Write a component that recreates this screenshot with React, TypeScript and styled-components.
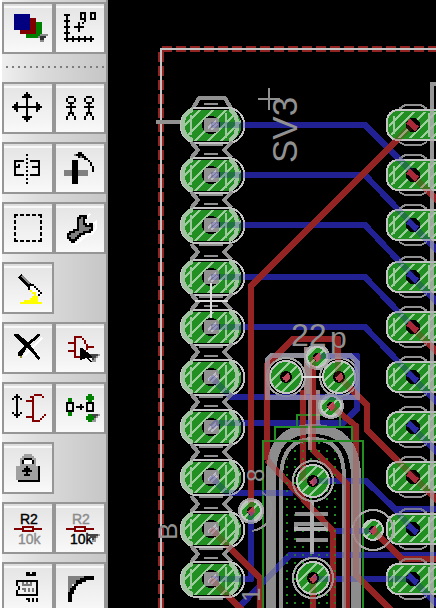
import React from "react";
import styled, { createGlobalStyle } from "styled-components";

const GlobalStyle = createGlobalStyle`
  * { box-sizing: border-box; }
  body { margin: 0; background: #000; font-family: "Liberation Sans", Arial, sans-serif; }
`;

const Editor = styled.main`
  display: flex;
  height: 100vh;
  overflow: hidden;
  background: #000;
`;

const Toolbar = styled.nav`
  flex: none;
  display: flex;
  flex-direction: column;
  gap: 8px;
  padding: 2px 0 0 0;
  overflow: hidden;
  border-left: 2px solid #fff;
  border-right: 2px solid #949494;
  background: linear-gradient(90deg, #efefef, #dcdcdc 35%, #c6c6c6);
`;

const ToolRow = styled.div`
  flex: none;
  display: flex;
`;

const Separator = styled.hr`
  flex: none;
  width: 100px;
  height: 2px;
  margin: 4px 0 6px 4px;
  border: 0;
  background: repeating-linear-gradient(90deg, #7c7c7c 0 2px, transparent 2px 6px);
`;

const ToolButton = styled.button`
  display: block;
  width: 52px;
  height: 52px;
  padding: 0;
  border: 2px solid #969696;
  border-radius: 0;
  background: linear-gradient(#dedede 0 2px, #f8f8f8 2px 4px, #e5e5e5 4px, #f9f9f9);
  cursor: pointer;
`;

const Glyph = styled.svg`
  display: block;
  width: 48px;
  height: 48px;
  shape-rendering: crispEdges;
  font-family: "Liberation Sans", Arial, sans-serif;
`;

const Board = styled.section`
  flex: 1;
  min-width: 0;
  background: #000;
`;

const BoardDrawing = styled.svg`
  display: block;
  width: 100%;
  height: 100%;
  shape-rendering: crispEdges;
  font-family: "Liberation Sans", Arial, sans-serif;
`;

/* Filled grid cells, listed as "x y w h" groups separated by commas. */
function Cells({ at, fill = "#000" }: { at: string; fill?: string }) {
  const d = at
    .split(",")
    .map((cell) => {
      const [x, y, w, h] = cell.trim().split(/\s+/).map(Number);
      return `M${x} ${y}h${w}v${h}h${-w}z`;
    })
    .join("");
  return <path d={d} fill={fill} />;
}

function Flyout() {
  return (
    <>
      <path d="M17 16h6v1h-1v1h-1v2h-2v-2h-1v-1h-1z" fill="#999" />
      <path d="M17 16h5v1h-1v1h-1v1h-1v-1h-1v-1h-1z" fill="#444" />
    </>
  );
}

function Resistor({ name, value }: { name: string; value: string }) {
  return (
    <>
      <text x="9" y="11" fontSize="7" stroke={name} strokeWidth=".2" fill={name}>R2</text>
      <Cells fill="#800000" at="6 13 4 1,16 13 4 1,10 12 6 1,10 14 6 1,10 12 1 3,15 12 1 3" />
      <text x="8" y="21" fontSize="7" stroke={value} strokeWidth=".2" fill={value}>10k</text>
    </>
  );
}

const person = (x: number) =>
  [[1, 7, 3, 1], [0, 8, 1, 2], [4, 8, 1, 2], [1, 10, 3, 1], [2, 11, 1, 5], [0, 12, 5, 1], [1, 15, 1, 2], [3, 15, 1, 2], [0, 17, 1, 2], [4, 17, 1, 2]]
    .map(([dx, y, w, h]) => `${x + dx} ${y} ${w} ${h}`)
    .join(",");

const sideDashes = [9, 12, 15].map((p) => `${p} 6 2 1,${p} 19 2 1,6 ${p} 1 2,19 ${p} 1 2`).join(",");
const cornerDashes = "6 6 2 1,18 6 2 1,6 19 2 1,18 19 2 1,6 6 1 2,19 6 1 2,6 18 1 2,19 18 1 2";

const icons: Record<string, React.ReactNode> = {
  Display: (
    <>
      <Cells fill="#008000" at="12 10 8 8" />
      <Cells fill="#800000" at="9 8 8 8" />
      <Cells fill="#000080" at="6 6 8 8" />
      <path d="M18 17h1v-1h4v1h-1v1h-1v2h-2v-2h-1z" fill="#8b8b8b" />
      <Cells fill="#333" at="19 17 3 1,19 18 2 1" />
    </>
  ),
  Mark: (
    <Cells at="6 6 1 14,5 6 3 1,5 9 3 1,5 12 3 1,5 15 3 1,5 18 15 1,9 17 1 3,12 17 1 3,15 17 1 3,18 17 1 3,12 10 1 5,10 12 5 1,13 5 3 1,13 5 1 4,15 5 1 4,13 8 3 1,18 5 3 1,18 5 1 4,20 5 1 4,18 8 3 1,15 9 1 1,14 10 1 1" />
  ),
  Move: (
    <Cells at="12 5 1 15,5 12 15 1,11 6 3 1,10 7 5 1,11 18 3 1,10 17 5 1,6 11 1 3,7 10 1 5,18 11 1 3,17 10 1 5" />
  ),
  Copy: <Cells at={`${person(6)},${person(15)}`} />,
  Mirror: (
    <Cells at="12 6 1 1,12 8 1 1,12 10 1 1,12 12 1 1,12 14 1 1,12 16 1 1,12 18 1 1,12 20 1 1,6 9 1 8,6 9 5 1,6 16 5 1,7 12 2 1,8 11 1 1,14 9 5 1,18 9 1 8,14 16 5 1,15 12 3 1" />
  ),
  Rotate: (
    <>
      <Cells fill="#808080" at="5 14 12 3" />
      <Cells at="9 9 3 12,11 6 4 1,12 5 2 1,12 7 2 1,14 7 2 1,15 8 2 1,17 9 1 1,18 10 1 2,19 12 1 3" />
      <Cells fill="#808080" at="10 6 1 1,13 7 1 1" />
    </>
  ),
  Group: <Cells at={`${cornerDashes},${sideDashes}`} />,
  Change: (
    <>
      <path d="M9 21h2l6-5h2l2-3v-3l-3 2-3-1v-2l3-3" fill="none" stroke="#fff" strokeWidth="1" />
      <path d="M12 9V8h1V7h3v1h-1v3h1v1h2v-1h1v3h-1v1h-3v1h-2v1h-1v1h-1v1h-1v1H9v-1H8v-1H7v-2h1v-1h2v-1h2z" fill="#808080" stroke="#000" strokeWidth="1" />
    </>
  ),
  Paint: (
    <>
      <path d="M9 7l5 5" stroke="#000" strokeWidth="2.5" />
      <path d="M10 7l4 4" stroke="#8a8a8a" strokeWidth="1" />
      <path d="M13 12l2-1 5 5-1 1-3-1z" fill="#fff" />
      <Cells at="13 11 3 1,13 12 1 2,16 12 1 1,17 13 1 1,18 14 1 1,19 15 1 1,18 16 1 1" />
      <Cells fill="#ff0" at="14 14 1 1,15 15 1 1,16 15 1 1,16 16 1 1,15 17 3 1,14 18 4 1,11 19 7 1,9 20 11 1" />
    </>
  ),
  Delete: (
    <>
      <path d="M8 7l11 10M20 8l-9 9" stroke="#fff" strokeWidth="1" />
      <path d="M6 6h2l5 4 3 4 3 4-1 1-3-4-5-4-4-4zM18 6h1v1l-6 5-3 5H8v-2l4-4z" fill="#000" />
      <Cells fill="#99922d" at="9 17 1 1" />
    </>
  ),
  Add: (
    <>
      <Cells fill="#800000" at="10 7 1 11,10 7 4 1,14 8 1 1,15 9 1 2,16 11 1 3,16 12 4 1,7 10 3 1,7 14 3 1,10 17 4 1,15 14 1 2" />
      <Flyout />
      <path d="M13 13h1l5 4v1h-2l2 2h-1l-2-2-3 1z" fill="#000" />
    </>
  ),
  Pinswap: (
    <>
      <Cells at="7 6 1 12,6 7 3 1,5 8 1 1,9 8 1 1,6 16 3 1,5 15 1 1,9 15 1 1" />
      <Cells fill="#800000" at="15 7 1 13,12 9 3 1,12 17 4 1,16 6 4 1,14 7 2 1,20 7 1 1,15 19 4 1,19 18 1 1,20 17 1 1,21 16 1 1" />
    </>
  ),
  Replace: (
    <>
      <Cells fill="#008000" at="7 8 2 2,7 15 2 2,16 7 4 2,17 6 2 4" />
      <Cells at="6 10 4 1,6 10 1 5,9 10 1 5,6 14 4 1,16 10 4 1,16 10 1 5,19 10 1 5,16 14 4 1,11 12 4 1,13 11 1 3" />
      <Flyout />
      <Cells fill="#008000" at="16 17 4 2,17 16 2 4" />
    </>
  ),
  Lock: (
    <>
      <Cells at="8 12 11 8,16 9 1 3" />
      <path d="M7 19v-7h2V8h1V7h1V6h4v1h1v1h1v4h1v7z" fill="#a0a0a0" />
      <Cells fill="#fff" at="11 9 4 2" />
      <Cells at="11 8 4 1,10 9 1 2,15 9 1 2,11 13 3 1,10 14 5 1,12 12 1 5,11 16 3 1" />
    </>
  ),
  Name: <Resistor name="#000" value="#8c8c8c" />,
  Value: (
    <>
      <Resistor name="#8c8c8c" value="#000" />
      <Flyout />
    </>
  ),
  Smash: (
    <>
      <Cells at="7 9 11 1,7 9 1 3,17 9 1 8,7 16 11 1,7 14 1 3,8 12 1 2,12 6 5 1,13 5 1 1,15 5 1 1,12 5 1 1,16 5 1 1,12 18 2 1,13 18 1 2,15 18 1 2,17 18 1 2" />
      <Cells fill="#777" at="10 10 1 2,12 10 1 2,14 10 1 2,10 11 5 1,10 13 2 1,11 13 1 2,13 13 1 2,15 13 1 2" />
    </>
  ),
  Miter: (
    <>
      <Cells fill="#808080" at="7 7 2 9,7 7 9 2,9 9 2 2" />
      <Cells at="15 7 5 2,13 8 3 2,11 9 3 2,10 11 2 1,9 12 2 2,8 13 2 3,7 15 2 5" />
    </>
  ),
};

const rows = [
  ["Move", "Copy"], ["Mirror", "Rotate"], ["Group", "Change"], ["Paint"], ["Delete", "Add"],
  ["Pinswap", "Replace"], ["Lock"], ["Name", "Value"], ["Smash", "Miter"],
];

function Tools({ names }: { names: string[] }) {
  return (
    <ToolRow>
      {names.map((name) => (
        <ToolButton key={name} type="button" aria-label={name}>
          <Glyph viewBox="1 1 24 24" aria-hidden="true">{icons[name]}</Glyph>
        </ToolButton>
      ))}
    </ToolRow>
  );
}

const RED = "#912323";
const BLUE = "#212191";
const GREEN = "#218f21";
const SILK = "#919191";
const LIGHT = "#c4c4c4";

const padRows = [125, 175, 225, 277, 327, 377, 427, 477, 529, 579];

const blueTraces = `
  M211 125H365L412 172 M211 175H365L412 224 M211 225H365L412 275
  M211 277H365L412 326 M211 327H365L412 376 M211 377L231 397H357V356H320
  M211 427L216 423H343L357 409V390 M211 477L227 493H293 M313 481H366L395 509H436
  M211 579H251V512 M238 608L290 555H436 M335 531H373 M313 579H412
  M412 225L440 253 M412 277L440 305 M412 377L440 405 M412 427L440 455
  M412 529L395 509 M412 579L440 607`;

const redTraces = `
  M412 125L251 286V512 M267 460V365L293 339H338V377 M267 460L333 531V608
  M303 390V481 M313 357V450L347 484V608 M339 377L367 405V430L412 475L440 503
  M331 406L356 426V575L392 611 M373 530L402 559H436
  M211 529L260 578V608 M211 579L242 610 M313 578V608 M412 175L440 203 M412 327L440 355`;

function LeftPad({ y, first }: { y: number; first: boolean }) {
  return (
    <g transform={`translate(211 ${y})`}>
      {!first && (
        <path d="M-20-17-13-25-20-33M21-17 13-25 21-33" fill="none" stroke={SILK} strokeWidth="4" />
      )}
      <path d="M-7-21H7M-12 20H12" stroke={SILK} strokeWidth="2" />
      <rect x="-30" y="-17" width="63" height="35" rx="16" fill="#000" stroke={LIGHT} strokeWidth="2" />
      <rect x="-29" y="-15" width="59" height="31" rx="14" fill={GREEN} />
      <rect x="-29" y="-15" width="59" height="31" rx="14" fill="url(#hatch)" />
      <path d="M-18-15Q-28-13-28 0T-18 15M18-15Q26-13 26 0T18 15" fill="none" stroke="#a3c4a3" strokeWidth="4" />
      <path d="M-20-10V10M15-12V13" stroke="#9fc79f" strokeWidth="2" />
      <circle r="9" fill="#000" />
      <rect x="-7" y="-7" width="15" height="14" rx="3" fill={SILK} />
      <path d="M-3 3L5-4M0 5L6-1" stroke="#bcbcc8" strokeWidth="2" />
    </g>
  );
}

function RightPad({ y }: { y: number }) {
  return (
    <g transform={`translate(412 ${y})`}>
      <path d="M-13-16-7-20H9L15-16M-13 17-7 20H9L15 17" fill="none" stroke={SILK} strokeWidth="2" />
      <rect x="-25" y="-15" width="66" height="30" rx="11" fill={GREEN} stroke={LIGHT} strokeWidth="2" />
      <rect x="-23" y="-13" width="62" height="26" rx="9" fill="url(#fineHatch)" />
      <path d="M-18-9V9M17-12V12" stroke="#a1c8a1" strokeWidth="2" />
      <circle cx="1" r="7" fill="#000" />
    </g>
  );
}

function RoundPad({ x, y, r, ring = r + 3 }: { x: number; y: number; r: number; ring?: number }) {
  return (
    <g transform={`translate(${x} ${y})`}>
      <circle r={ring} fill="none" stroke="#a8a8a8" strokeWidth="2" />
      <circle r={r} fill={GREEN} stroke={LIGHT} strokeWidth="2" />
      <circle r={r - 1} fill="url(#fineHatch)" />
      <circle r={r > 13 ? 6 : 4} fill="#000" />
      <path d="M-3 2L3-3M-1 4L4 0" stroke="#c04a5c" strokeWidth="3" />
    </g>
  );
}

function Layout() {
  return (
    <BoardDrawing viewBox="108 0 328 608" preserveAspectRatio="xMinYMin slice" role="img" aria-label="Board layout">
      <defs>
        <pattern id="hatch" width="13" height="13" patternUnits="userSpaceOnUse">
          <path d="M-2 15L15-2M-2 2L2-2M11 15L15 11" stroke="#9ccf9c" strokeWidth="2" />
        </pattern>
        <pattern id="fineHatch" width="11" height="11" patternUnits="userSpaceOnUse">
          <path d="M-2 13L13-2M-2 2L2-2M9 13L13 9" stroke="#9ccf9c" strokeWidth="2" />
        </pattern>
        <pattern id="dots" x="286" y="450" width="8" height="8" patternUnits="userSpaceOnUse">
          <rect width="2" height="2" fill="#238a23" />
        </pattern>
      </defs>

      <path d="M161 608V49H440" fill="none" stroke={RED} strokeWidth="6" strokeDasharray="10 4" />
      <path d="M161 608V49H440" fill="none" stroke={LIGHT} strokeWidth="2" />
      <g fill="none" strokeWidth="6" strokeLinejoin="round">
        <path d={blueTraces} stroke={BLUE} />
        <path d={redTraces} stroke={RED} />
      </g>

      <path d="M192 110L199 98H225L232 110M156 122H182" fill="none" stroke={SILK} strokeWidth="4" />
      {padRows.map((y, i) => <LeftPad key={y} y={y} first={i === 0} />)}
      {padRows.map((y) => <RightPad key={y} y={y} />)}
      <path d="M436 84H432V608" fill="none" stroke="#b0b0b0" strokeOpacity=".85" strokeWidth="4" />

      <path d="M285 608V470Q287 442 313 441T342 470V608z" fill="url(#dots)" />
      <path d="M271 608V474Q272 429 313 429T356 474V608" fill="none" stroke="#999" strokeOpacity=".92" strokeWidth="10" />
      <path d="M281 608V475Q283 439 313 439T344 475V608" fill="none" stroke={SILK} strokeWidth="4" />
      <path d="M263 608V441H363V608M275 441V427H352V441M297 427V415H340V427" fill="none" stroke={GREEN} strokeWidth="2" />
      <path d="M295 514H328M296 540H328M296 529V524H326V529" fill="none" stroke={SILK} strokeWidth="4" />
      <path d="M294 529H328" stroke="#b0b0b0" strokeWidth="4" />
      <path d="M312 500V554" stroke="#b0b0b0" strokeWidth="4" />

      <path d="M272 355H350L357 362V397H267V360z" fill="none" stroke="#a9a9b9" strokeOpacity=".85" strokeWidth="5" />
      <path d="M306 347V400M310 360V450M318 390V425" stroke="#c4a4a4" strokeWidth="4" strokeOpacity=".8" />
      <RoundPad x={286} y={377} r={16} />
      <RoundPad x={339} y={377} r={16} />
      <RoundPad x={317} y={357} r={10} ring={12} />
      <RoundPad x={331} y={406} r={10} ring={12} />
      <RoundPad x={313} y={481} r={16} ring={20} />
      <RoundPad x={313} y={578} r={16} ring={20} />
      <path d="M262 492Q274 500 271 514T252 531" fill="none" stroke={SILK} strokeWidth="2" />
      <RoundPad x={251} y={511} r={10} ring={12} />
      <RoundPad x={373} y={530} r={10} ring={20} />

      <g fill="none" strokeWidth="6" opacity=".25">
        <path d={blueTraces} stroke="#2424a0" />
        <path d={redTraces} stroke="#a02424" />
      </g>
      {padRows.map((y, i) => (
        <path
          key={y}
          d={`M408 ${y - 4}L417 ${y + 4}`}
          stroke={[0, 1, 4, 7].includes(i) ? "#a82a38" : "#2929a4"}
          strokeWidth="6"
        />
      ))}

      <path d="M258 99H280M269 88V110" stroke={SILK} strokeWidth="2" />
      <path d="M195 301H228M211 283V318M302 377H323" stroke="#dedede" strokeWidth="2" />
      <g fill={SILK}>
        <text transform="translate(297 163) rotate(-90)" fontSize="35">SV3</text>
        <text x="291" y="346" fontSize="32">22</text>
        <text x="330" y="348" fontSize="30">p</text>
        <text transform="translate(264 482) rotate(-90)" fontSize="24">8</text>
        <text transform="translate(177 540) rotate(-90)" fontSize="26">B</text>
        <text transform="translate(260 602) rotate(-90)" fontSize="26">1</text>
      </g>
    </BoardDrawing>
  );
}

export default function App() {
  return (
    <>
      <GlobalStyle />
      <Editor>
        <Toolbar aria-label="Tools">
          <Tools names={["Display", "Mark"]} />
          <Separator />
          {rows.map((names) => <Tools key={names[0]} names={names} />)}
        </Toolbar>
        <Board><Layout /></Board>
      </Editor>
    </>
  );
}
